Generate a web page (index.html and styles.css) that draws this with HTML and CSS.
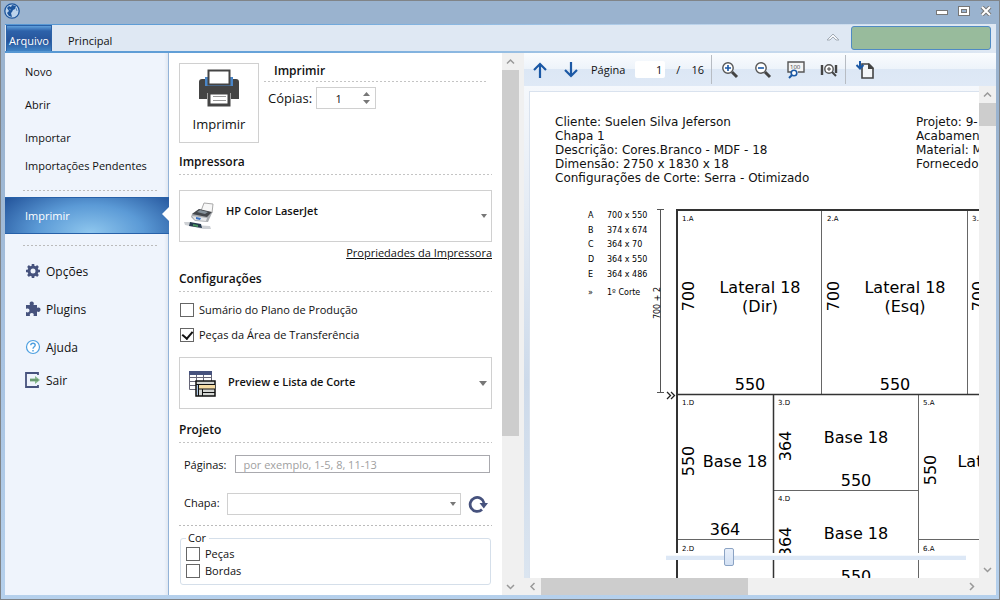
FILE: index.html
```html
<!DOCTYPE html>
<html lang="pt-BR">
<head>
  <meta charset="UTF-8">
  <meta name="viewport" content="width=device-width, initial-scale=1.0">
  <title>Imprimir</title>
  <link rel="stylesheet" href="styles.css">
</head>
<body>
  <div class="window">
    <header class="titlebar">
      <svg class="logo" width="16" height="16" viewBox="0 0 16 16">
        <circle cx="8" cy="8" r="7.2" fill="#bcd3ec" stroke="#1d559c" stroke-width="1.3"/>
        <path d="M3 5 5 3 7 4 8 2 12 3 11 6 9 7 8 9 7 10 8 14 5 13 3 10 5 8Z" fill="#1d559c"/>
        <path d="M12 5 13 8M5 6 7 7" stroke="#5d8cc2" fill="none"/>
      </svg>
      <div class="window-buttons">
        <button type="button" aria-label="Minimizar">
          <svg width="12" height="10" viewBox="0 0 12 10"><rect x="0.5" y="4.5" width="11" height="4" fill="#fff" stroke="#777"/></svg>
        </button>
        <button type="button" aria-label="Maximizar">
          <svg width="12" height="10" viewBox="0 0 12 10"><rect x="0.5" y="0.5" width="11" height="9" fill="#fff" stroke="#777"/><rect x="3.5" y="3.5" width="5" height="3" fill="#9ab3cf" stroke="#777"/></svg>
        </button>
        <button type="button" aria-label="Fechar">
          <svg width="12" height="10" viewBox="0 0 12 10"><path d="M2 1 10 9M10 1 2 9" stroke="#777" stroke-width="4"/><path d="M2 1 10 9M10 1 2 9" stroke="#fff" stroke-width="2"/></svg>
        </button>
      </div>
    </header>

    <div class="tabs">
      <button type="button" class="tab tab-active">Arquivo</button>
      <button type="button" class="tab">Principal</button>
      <svg class="collapse" width="14" height="8" viewBox="0 0 14 8"><path d="M1 7 7 1 13 7H10L7 4 4 7Z" fill="#f4f7fb" stroke="#a3abb5"/></svg>
      <div class="status-box"></div>
    </div>

    <div class="main">
      <nav class="menu">
        <a href="#">Novo</a>
        <a href="#">Abrir</a>
        <a href="#">Importar</a>
        <a href="#" class="short">Importações Pendentes</a>
        <hr>
        <a href="#" class="active">Imprimir</a>
        <hr>
        <a href="#" class="with-icon">
          <svg width="16" height="16" viewBox="0 0 16 16">
            <circle cx="8" cy="8" r="4" fill="none" stroke="#46527d" stroke-width="3"/>
            <path d="M8 1V4M8 12V15M1 8H4M12 8H15M3 3 5 5M11 11 13 13M13 3 11 5M5 11 3 13" stroke="#46527d" stroke-width="2.6"/>
          </svg>
          Opções
        </a>
        <a href="#" class="with-icon">
          <svg width="16" height="16" viewBox="0 0 16 16">
            <path d="M1 4H5C4 2 5 0.5 6.7 0.5S9.500 2 8.500 4H12V7C14 6 15.500 7 15.500 8.700S14 11.500 12 10.500V15H8.500C9.300 13 8.300 12 6.800 12S4.300 13 5 15H1V11C3 12 4.500 11 4.500 9.500S3 7 1 8Z" fill="#46527d"/>
          </svg>
          Plugins
        </a>
        <a href="#" class="with-icon">
          <svg width="16" height="16" viewBox="0 0 16 16">
            <circle cx="8" cy="8" r="6.500" fill="#fff" stroke="#4d9fe0" stroke-width="1.200"/>
            <path d="M5.800 6.200C5.800 3.500 10.200 3.500 10.200 6.200 10.200 7.800 8 7.800 8 9.800M8 11V12.500" fill="none" stroke="#4d9fe0" stroke-width="1.400"/>
          </svg>
          Ajuda
        </a>
        <a href="#" class="with-icon last">
          <svg width="16" height="16" viewBox="0 0 16 16">
            <path d="M13 3V1H1V15H13V13" fill="none" stroke="#46527d" stroke-width="1.800"/>
            <path d="M5 6.500H10V4L15 8 10 12V9.500H5Z" fill="#85b88b"/>
            <path d="M5 8H13" stroke="#4f7d58"/>
          </svg>
          Sair
        </a>
      </nav>

      <form class="print-form">
        <div class="top-row">
          <button type="button" class="print-btn">
            <svg width="42" height="38" viewBox="0 0 42 38">
              <path d="M7 8H35V18H7Z" fill="#4a86c8"/>
              <path d="M4 10H7V17H35V10H38Q41 10 41 13V30H33V24H9V30H1V13Q1 10 4 10Z" fill="#444"/>
              <path d="M10.500 1.500H31.500V15.500H10.500Z" fill="#fff" stroke="#444" stroke-width="2"/>
              <path d="M11 24H31V36H11Z" fill="#fff" stroke="#444" stroke-width="3"/>
              <path d="M15 27.500H28M15 31.500H28" stroke="#999"/>
            </svg>
            Imprimir
          </button>
          <div class="copies">
            <h2>Imprimir</h2>
            <div class="copies-row">
              <label for="copias">Cópias:</label>
              <div class="spinner">
                <input type="text" id="copias" value="1">
                <svg width="7" height="12" viewBox="0 0 7 12"><path d="M0 4 3.500 0 7 4ZM0 8H7L3.500 12Z" fill="#777"/></svg>
              </div>
            </div>
          </div>
        </div>

        <h2>Impressora</h2>
        <div class="combo printer">
          <svg class="combo-icon" width="32" height="32" viewBox="0 0 32 32">
            <path d="M17 11 20 3 29 4 28 13Z" fill="#f7f7f7" stroke="#aaa"/>
            <path d="M8 14 15 9 28 13 24 22 11 21 7 17Z" fill="#a9acb0"/>
            <path d="M8 14 15 9 28 12 23 17Z" fill="#45484c"/>
            <path d="M13 12 16 10 24 12 21 14Z" fill="#85919a"/>
            <path d="M8 16 23 18 22 21 11 20Z" fill="#e4e6e8"/>
            <path d="M12 17 17 18 16 20 12 19Z" fill="#3d74c4"/>
            <path d="M0 22 7 22 9 25 26 26 27 29 19 29 6 26 1 25Z" fill="#cdd0d4"/>
            <path d="M6 22 17 24 18 28 5 26Z" fill="#25384d"/>
            <path d="M9 24 14 25 14 27 9 26Z" fill="#48935f"/>
          </svg>
          <select aria-label="Impressora"><option>HP Color LaserJet</option></select>
        </div>
        <a href="#" class="props">Propriedades da Impressora</a>

        <h2>Configurações</h2>
        <div class="checks">
          <label><input type="checkbox"> Sumário do Plano de Produção</label>
          <label><input type="checkbox" checked> Peças da Área de Transferência</label>
        </div>
        <div class="combo layout">
          <svg class="combo-icon" width="32" height="32" viewBox="0 0 32 32">
            <path d="M4.500 4.500H26.500V22.500H4.500Z" fill="#fff" stroke="#667"/>
            <path d="M5 10.500H26M5 14.500H26M5 18.500H26M11.500 7V22M18.500 7V22" stroke="#667"/>
            <path d="M4 4H27V8H4Z" fill="#46527d"/>
            <path d="M11 14H30V29H11Z" fill="#d3d5d2" stroke="#111" stroke-width="1.500"/>
            <path d="M12 18H14V28H12Z" fill="#a9c6e8"/>
            <path d="M14 18H30V22H14Z" fill="#f5dca5"/>
            <path d="M11 17.500H30M13.500 18V29M14 22H30M17.500 22V29M18 25.500H30" stroke="#111"/>
          </svg>
          <select aria-label="Layout"><option>Preview e Lista de Corte</option></select>
        </div>

        <h2>Projeto</h2>
        <div class="field pages">
          <label for="paginas">Páginas:</label>
          <input type="text" id="paginas" placeholder="por exemplo, 1-5, 8, 11-13">
        </div>
        <div class="field sheet-field">
          <label for="chapa">Chapa:</label>
          <div class="combo small">
            <select id="chapa"><option></option></select>
          </div>
          <button type="button" class="refresh" aria-label="Atualizar">
            <svg width="20" height="18" viewBox="0 0 20 18">
              <path d="M14 14.500A7 7 0 1 1 16 8" fill="none" stroke="#46527d" stroke-width="2.800"/>
              <path d="M11.500 8H20L15.800 13.500Z" fill="#46527d"/>
            </svg>
          </button>
        </div>
        <hr>
        <fieldset>
          <legend>Cor</legend>
          <label><input type="checkbox"> Peças</label>
          <label><input type="checkbox"> Bordas</label>
        </fieldset>
      </form>

      <div class="scrollbar form-scroll">
        <svg width="17" height="17" viewBox="0 0 17 17"><path d="M5 10.500 8.500 7 12 10.500" class="chevron"/></svg>
        <div class="track"><div class="thumb"></div></div>
        <svg width="17" height="17" viewBox="0 0 17 17"><path d="M5 7 8.500 10.500 12 7" class="chevron"/></svg>
      </div>

      <section class="preview">
        <div class="toolbar">
          <button type="button" aria-label="Página anterior">
            <svg width="16" height="18" viewBox="0 0 16 18"><path d="M8 17V3M2 9 8 3 14 9" fill="none" stroke="#1b58a5" stroke-width="2.200"/></svg>
          </button>
          <button type="button" aria-label="Próxima página">
            <svg width="16" height="18" viewBox="0 0 16 18"><path d="M8 1V15M2 9 8 15 14 9" fill="none" stroke="#1b58a5" stroke-width="2.200"/></svg>
          </button>
          <label for="pagina">Página</label>
          <input type="text" id="pagina" value="1">
          <span class="slash">/</span>
          <span>16</span>
          <div class="divider"></div>
          <button type="button" aria-label="Ampliar">
            <svg width="18" height="18" viewBox="0 0 18 18">
              <path d="M11 11 16 16" stroke="#444" stroke-width="3"/>
              <circle cx="7" cy="7" r="5.200" fill="#fff" stroke="#555" stroke-width="1.400"/>
              <path d="M4 7H10M7 4V10" stroke="#1b58a5" stroke-width="1.600"/>
            </svg>
          </button>
          <button type="button" aria-label="Reduzir">
            <svg width="18" height="18" viewBox="0 0 18 18">
              <path d="M11 11 16 16" stroke="#444" stroke-width="3"/>
              <circle cx="7" cy="7" r="5.200" fill="#fff" stroke="#555" stroke-width="1.400"/>
              <path d="M4 7H10" stroke="#1b58a5" stroke-width="1.600"/>
            </svg>
          </button>
          <button type="button" aria-label="Zoom 100">
            <svg width="18" height="18" viewBox="1 0 18 18">
              <path d="M5 11H2V1H18V11H12" fill="#f4f4f4" stroke="#555" stroke-width="1.400"/>
              <text x="4" y="8" font-size="6" fill="#444">100</text>
              <circle cx="8" cy="12" r="2.800" fill="#fff" stroke="#1b58a5" stroke-width="1.600"/>
              <path d="M6 14 3 17" stroke="#1b58a5" stroke-width="2"/>
            </svg>
          </button>
          <button type="button" aria-label="Largura da página">
            <svg width="18" height="18" viewBox="0 0 18 18">
              <path d="M2 4V14M16 4V12" stroke="#444" stroke-width="2.400"/>
              <circle cx="9" cy="8" r="4.200" fill="#fff" stroke="#555" stroke-width="1.400"/>
              <path d="M7 8H11M9 6V10" stroke="#444"/>
              <path d="M12 11 16 15" stroke="#444" stroke-width="2"/>
            </svg>
          </button>
          <div class="divider"></div>
          <button type="button" aria-label="Exportar página">
            <svg width="20" height="20" viewBox="0 0 20 20">
              <path d="M7 4H14L18 8V18H7Z" fill="#f4f6f8" stroke="#444" stroke-width="1.600"/>
              <path d="M13 3 19 9H13Z" fill="#444"/>
              <path d="M5 1V8M1.500 5 5 8.500 8.500 5" fill="none" stroke="#1b58a5" stroke-width="2"/>
            </svg>
          </button>
        </div>

        <div class="viewer">
          <div class="paper-area">
            <div class="paper">
              <div class="paper-head">
                <p>Cliente: Suelen Silva Jeferson<br>Chapa 1<br>Descrição: Cores.Branco - MDF - 18<br>Dimensão: 2750 x 1830 x 18<br>Configurações de Corte: Serra - Otimizado</p>
                <p>Projeto: 9-<br>Acabamento<br>Material: M<br>Fornecedor</p>
              </div>
              <svg class="plan" width="740" height="460" viewBox="0 0 740 460">
                <!-- list of cut sizes -->
                <g class="list">
                  <text x="58" y="18">A</text><text x="77" y="18">700 x 550</text>
                  <text x="58" y="33">B</text><text x="77" y="33">374 x 674</text>
                  <text x="58" y="47">C</text><text x="77" y="47">364 x 70</text>
                  <text x="58" y="62">D</text><text x="77" y="62">364 x 550</text>
                  <text x="58" y="77">E</text><text x="77" y="77">364 x 486</text>
                  <text x="58" y="95">»</text><text x="77" y="95">1º Corte</text>
                </g>
                <!-- dimension line -->
                <path d="M130.500 9.500V193M127 9.500H134M127 192.500H134" stroke="#555" fill="none"/>
                <text class="dim" transform="translate(130 103) rotate(-90)">700 + 2</text>
                <path d="M137 192 140.500 195.500 137 199M141 192 144.500 195.500 141 199" fill="none" stroke="#222" stroke-width="1.300"/>
                <!-- cuts -->
                <path d="M437.500 10V194M291.500 10V194M388.500 194V460" class="thin"/>
                <path d="M147 339.500H243M388 339.500H740M243 290.500H388M243 387.500H388" class="thin"/>
                <path d="M147 194.500H740M243.500 194V460" class="mid"/>
                <path d="M740 10H147V460" class="edge"/>
                <!-- part numbers -->
                <g class="num">
                  <text x="152" y="21">1.A</text>
                  <text x="297" y="21">2.A</text>
                  <text x="442" y="21">3.A</text>
                  <text x="152" y="205">1.D</text>
                  <text x="248" y="205">3.D</text>
                  <text x="393" y="205">5.A</text>
                  <text x="248" y="301">4.D</text>
                  <text x="152" y="351">2.D</text>
                  <text x="393" y="351">6.A</text>
                </g>
                <!-- parts -->
                <g class="part">
                  <text x="230" y="93">Lateral 18</text>
                  <text x="230" y="112">(Dir)</text>
                  <text x="220" y="190">550</text>
                  <text transform="translate(164 96) rotate(-90)">700</text>
                  <text x="375" y="93">Lateral 18</text>
                  <text x="375" y="112">(Esq)</text>
                  <text x="365" y="190">550</text>
                  <text transform="translate(309 96) rotate(-90)">700</text>
                  <text transform="translate(454 96) rotate(-90)">700</text>
                  <text x="205" y="267">Base 18</text>
                  <text x="195" y="335">364</text>
                  <text transform="translate(164 261) rotate(-90)">550</text>
                  <text x="326" y="243">Base 18</text>
                  <text x="326" y="286">550</text>
                  <text transform="translate(261 246) rotate(-90)">364</text>
                  <text x="326" y="339">Base 18</text>
                  <text x="326" y="382">550</text>
                  <text transform="translate(261 342) rotate(-90)">364</text>
                  <text x="468" y="267">Lateral 18</text>
                  <text transform="translate(406 270) rotate(-90)">550</text>
                </g>
              </svg>
            </div>
            <input type="range" class="zoom" aria-label="Zoom" min="0" max="100" value="20">
          </div>
          <div class="scrollbar page-scroll">
            <svg width="17" height="17" viewBox="0 0 17 17"><path d="M5 10.500 8.500 7 12 10.500" class="chevron"/></svg>
            <div class="track"><div class="thumb"></div></div>
            <svg width="17" height="17" viewBox="0 0 17 17"><path d="M5 7 8.500 10.500 12 7" class="chevron"/></svg>
          </div>
        </div>
        <div class="scrollbar horizontal">
          <svg width="17" height="17" viewBox="0 0 17 17"><path d="M10.500 5 7 8.500 10.500 12" class="chevron"/></svg>
          <div class="track"><div class="thumb"></div></div>
          <svg width="17" height="17" viewBox="0 0 17 17"><path d="M7 5 10.500 8.500 7 12" class="chevron"/></svg>
        </div>
      </section>
    </div>
  </div>
</body>
</html>
```

FILE: styles.css
```css
* {
  box-sizing: border-box;
}

html,
body {
  height: 100%;
  margin: 0;
}

body {
  font-family: "Open Sans", "Noto Sans", sans-serif;
  font-size: 11px;
  color: #111;
  overflow: hidden;
}

button,
input,
select {
  font: inherit;
  color: inherit;
}

button {
  border: none;
  background: none;
  padding: 0;
}

svg {
  display: block;
  flex: none;
}

.window {
  display: flex;
  flex-direction: column;
  height: 100%;
  padding: 0 3px 4px 4px;
  border: 1px solid #808488;
  background: linear-gradient(#9ab3cf 20%, #a8c3e2 60%, #b5d0ec);
}

.titlebar {
  display: flex;
  justify-content: space-between;
  align-items: center;
  flex: none;
  height: 23px;
  padding: 0 4px 3px 0;
}

.logo {
  margin-left: -1px;
}

.window-buttons {
  display: flex;
  gap: 10px;
}

/* tabs */
.tabs {
  display: flex;
  flex: none;
  height: 29px;
  padding-left: 1px;
  background: #dfe8f3;
  border-top: 1px solid #8da7c4;
  border-bottom: 2px solid;
  border-image: linear-gradient(90deg, #5596d2, #6aa5da 30%, #b5cfe9 65%, #dfe8f3) 1;
}

.tab {
  padding: 5px 16px 0;
}

.tab-active {
  width: 46px;
  padding: 3px 0 0;
  color: #fff;
  border: 1px solid #2b62a8;
  border-bottom: none;
  background: linear-gradient(#5f9fdb, #2d62aa 20%, #27549a 60%, #3f83c6);
}

.collapse {
  margin: 8px 11px 0 auto;
}

.status-box {
  width: 140px;
  height: 24px;
  margin: 1px 5px 0 0;
  border: 1px solid #4f8ac4;
  border-radius: 3px;
  background: #98bb9c;
}

.main {
  display: flex;
  flex: 1;
  min-height: 0;
  background: #f0f0f0;
}

/* left menu */
.menu {
  flex: none;
  width: 164px;
  padding-top: 2px;
  background: linear-gradient(270deg, #e0e7f1, #eff4fc 4px);
  border-right: 1px solid #93b3d8;
}

.menu a {
  display: flex;
  align-items: center;
  height: 33px;
  padding-left: 20px;
  color: #111;
  text-decoration: none;
}

.menu .short {
  height: 22px;
}

.menu hr {
  margin: 14px 10px 6px 18px;
}

.menu .active {
  position: relative;
  height: 37px;
  margin-right: -1px;
  color: #fff;
  border: solid #2761a9;
  border-width: 1px 0;
  background: radial-gradient(ellipse 65% 160% at 52% 100%, #8fc7ee, #5b9ad6 50%, #24559c);
}

.menu .active::after {
  content: "";
  position: absolute;
  right: 0;
  top: 9px;
  border: solid transparent;
  border-width: 7px 7px 7px 0;
  border-right-color: #fff;
}

.menu .active + hr {
  margin-top: 11px;
}

.menu .with-icon {
  height: 38px;
  gap: 5px;
  font-size: 12px;
}

.menu .last {
  height: 28px;
}

hr {
  height: 1px;
  margin: 0;
  border: none;
  background: repeating-linear-gradient(90deg, #bbb 0 2px, transparent 2px 4px);
}

/* print form */
.print-form {
  flex: none;
  width: 333px;
  padding: 10px 10px 0;
  background: #fff;
  overflow: hidden;
}

h2 {
  height: 21px;
  margin: 0;
  font-size: 12px;
  line-height: 16px;
  font-weight: 600;
  background: repeating-linear-gradient(90deg, #c4c4c4 0 2px, transparent 2px 4px) bottom / 100% 1px no-repeat;
}

.top-row {
  display: flex;
  gap: 5px;
  margin-bottom: 11px;
}

.print-btn {
  display: flex;
  flex-direction: column;
  align-items: center;
  width: 80px;
  height: 80px;
  padding-top: 5px;
  gap: 8px;
  font-size: 13px;
  border: 1px solid #d0d0d0;
  background: #fff;
}

.copies {
  flex: 1;
  padding-right: 5px;
}

.copies h2 {
  height: 19px;
  padding-left: 10px;
}

.copies-row {
  display: flex;
  align-items: center;
  gap: 4px;
  margin-top: 5px;
  padding-left: 4px;
  font-size: 13px;
}

.spinner {
  display: flex;
  align-items: center;
  width: 60px;
  height: 22px;
  padding-right: 5px;
  font-size: 11px;
  border: 1px solid #d0d0d0;
}

.spinner input {
  flex: 1;
  min-width: 0;
  padding: 0 3px 0 0;
  text-align: center;
  border: none;
}

.combo {
  display: grid;
  align-items: center;
  position: relative;
}

.combo::after {
  content: "";
  position: absolute;
  right: 5px;
  top: calc(50% - 2px);
  border: solid transparent;
  border-width: 4px 3px 0;
  border-top-color: #777;
}

.combo select {
  width: 100%;
  height: 52px;
  padding: 0 20px 0 48px;
  font-weight: 600;
  border: 1px solid #d0d0d0;
  border-radius: 0;
  background: none;
  appearance: none;
}

.combo-icon {
  position: absolute;
  left: 5px;
}

.layout .combo-icon {
  left: 6px;
}

.printer {
  margin-top: 15px;
}

.printer select {
  padding: 0 20px 12px 46px;
}

.layout {
  margin: 10px 0 13px;
}

.layout select {
  padding-bottom: 4px;
}

.layout::after {
  border-width: 5px 4px 0;
}

.props {
  display: block;
  width: fit-content;
  margin: 3px 0 11px auto;
  line-height: 15px;
  color: #111;
}

label {
  display: flex;
  align-items: center;
}

input[type="checkbox"] {
  display: grid;
  place-items: center;
  width: 14px;
  height: 14px;
  margin: 0 5px 0 0;
  border: 1px solid #666;
  background: #fff;
  appearance: none;
}

input[type="checkbox"]:checked::before {
  content: "";
  width: 5px;
  height: 8px;
  margin-bottom: 2px;
  border: solid #111;
  border-width: 0 2px 2px 0;
  transform: rotate(40deg);
}

.checks {
  padding: 5px 0 0 1px;
}

.checks label {
  height: 25px;
}

.field {
  display: flex;
  align-items: center;
  padding-left: 5px;
}

.pages {
  margin-top: 12px;
  padding-right: 2px;
  gap: 9px;
}

.pages input {
  flex: 1;
  height: 18px;
  padding: 0 7px;
  border: 1px solid #a9a9ae;
}

.pages input::placeholder {
  color: #a0a0a0;
}

.sheet-field {
  margin: 20px 0 10px;
  gap: 7px;
}

.sheet-field label {
  padding-bottom: 3px;
}

.small {
  flex: 1;
}

.small select {
  height: 22px;
}

.refresh {
  margin-right: 4px;
}

fieldset {
  margin: 5px 1px 0;
  padding: 0 5px 5px;
  border: 1px solid #d5dfea;
  border-radius: 3px;
}

legend {
  padding: 0 3px 0 2px;
  line-height: 14px;
}

fieldset label {
  height: 17px;
}

/* scrollbars */
.scrollbar {
  display: flex;
  flex-direction: column;
  flex: none;
  width: 17px;
  background: #f0f0f0;
}

.track {
  flex: 1;
}

.thumb {
  height: 72%;
  background: #cdcdcd;
}

.page-scroll .thumb {
  height: 5%;
}

.horizontal {
  flex-direction: row;
  width: auto;
  padding-right: 16px;
}

.horizontal .thumb {
  width: 49%;
  height: 100%;
}

.chevron {
  fill: none;
  stroke: #999;
  stroke-width: 1.5;
}

/* preview */
.preview {
  display: flex;
  flex-direction: column;
  flex: 1;
  min-width: 0;
  margin-left: 5px;
}

.toolbar {
  display: flex;
  align-items: center;
  flex: none;
  height: 33px;
  padding-left: 8px;
  gap: 15px;
  background: linear-gradient(#fafcfe, #edf3fa 49%, #dce7f5 50%, #dfe9f6);
}

.toolbar label {
  margin-left: -3px;
}

.toolbar input {
  width: 30px;
  height: 17px;
  margin-left: -5px;
  padding: 0 3px;
  text-align: right;
  border: none;
  border-radius: 2px;
  background: #fff;
}

.slash {
  margin: 0 -4px;
}

.divider {
  width: 1px;
  height: 29px;
  margin: 0 -6px 0 -8px;
  background: #b7bcc3;
}

.viewer {
  display: flex;
  flex: 1;
  min-height: 0;
}

.paper-area {
  position: relative;
  flex: 1;
  min-width: 0;
  padding: 5px 0 0 5px;
  overflow: hidden;
  background: linear-gradient(#f5f8fc, #cddaea 60%, #dbe5f0);
}

.paper {
  width: 1000px;
  height: 100%;
  padding-top: 23px;
  overflow: hidden;
  border: solid #d9e2ee;
  border-width: 1px 0 0 1px;
  background: #fff;
}

.paper-head {
  display: grid;
  grid-template-columns: 361px 1fr;
  height: 85px;
  padding-left: 25px;
}

.paper-head p {
  margin: 0;
  white-space: nowrap;
}

.paper-head,
.plan {
  font-family: "DejaVu Sans", Verdana, sans-serif;
  font-size: 12px;
  line-height: 14px;
}

.list text,
.dim {
  font-size: 8px;
}

.dim,
.part text {
  text-anchor: middle;
}

.num text {
  font-size: 7px;
}

.part text {
  font-size: 16px;
}

.thin {
  stroke: #666;
}

.mid {
  stroke: #333;
  stroke-width: 1.5;
}

.edge {
  fill: none;
  stroke: #333;
  stroke-width: 2;
}

.zoom {
  position: absolute;
  right: 13px;
  bottom: 12px;
  width: 300px;
  height: 19px;
  margin: 0;
  appearance: none;
  background: linear-gradient(#fff 30%, #dde8f6 50%) center / 100% 7px no-repeat;
}

.zoom::-webkit-slider-thumb {
  width: 10px;
  height: 18px;
  border: 1px solid #8ba3c4;
  border-radius: 2px;
  background: linear-gradient(#e8effa, #d3e1f4);
  appearance: none;
}
```
